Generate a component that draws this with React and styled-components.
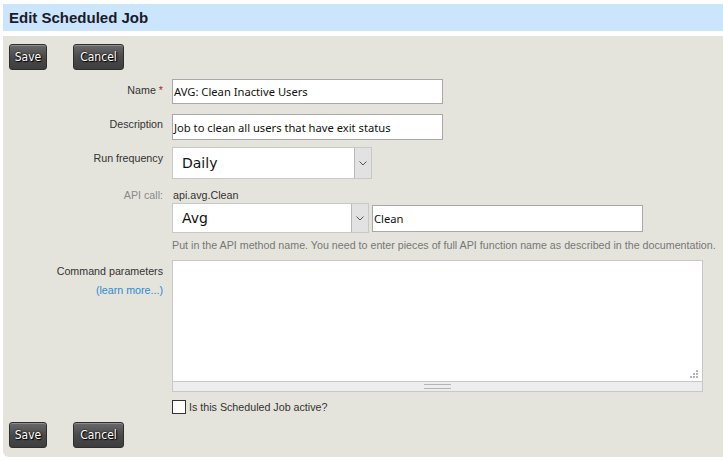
import React from "react";
import styled, { createGlobalStyle } from "styled-components";

const Global = createGlobalStyle`
  html, body { margin: 0; padding: 0; background: #fff; }
  body { font-family: "Liberation Sans", Arial, sans-serif; }
`;

const Page = styled.div`
  width: 723px;
  height: 460px;
  padding: 4px 0 0 3px;
  box-sizing: border-box;
  display: flex;
  flex-direction: column;
`;

const Header = styled.h1`
  margin: 0;
  height: 27px;
  background: #cbe5fd;
  font: bold 15px "Liberation Sans", Arial, sans-serif;
  color: #1a1a2a;
  display: flex;
  align-items: center;
  padding-left: 6px;
`;

const Panel = styled.div`
  margin-top: 5px;
  background: #e5e4dc;
  border-bottom-left-radius: 6px;
  padding: 8px 6px 8px 6px;
  height: 421px;
  box-sizing: border-box;
  display: flex;
  flex-direction: column;
`;

const ButtonBar = styled.div`
  display: flex;
  gap: 26px;
  margin-top: ${(p) => p.$top || 0}px;
`;

const Button = styled.button`
  height: 26px;
  padding: 0;
  width: ${(p) => p.$w}px;
  border: 1px solid #2e2e2e;
  border-radius: 3px;
  background: linear-gradient(#6a6a6a, #4a4a4a 50%, #3e3e3e);
  box-shadow: inset 0 1px 0 rgba(255,255,255,0.25);
  color: #fff;
  font: 12px "DejaVu Sans Condensed", "DejaVu Sans", sans-serif;
  text-shadow: 0 0 2px #000, 1px 1px 1px #000;
  cursor: pointer;
`;

const Form = styled.div`
  display: grid;
  grid-template-columns: 154px 1fr;
  column-gap: 9px;
  margin-top: 9px;
`;

const Label = styled.div`
  text-align: right;
  font-size: 10.7px;
  color: ${(p) => (p.$muted ? "#8a8a8a" : "#333")};
  padding-top: ${(p) => p.$pt || 0}px;
`;

const Star = styled.span`
  color: #a0302a;
`;

const Field = styled.div`
  margin-bottom: ${(p) => p.$mb || 0}px;
  display: flex;
  flex-direction: column;
`;

const TextInput = styled.div`
  width: ${(p) => p.$w}px;
  height: ${(p) => p.$h || 25}px;
  box-sizing: border-box;
  border: 1px solid #a8a8a8;
  background: #fff;
  font: 11.2px "Noto Sans", Tahoma, sans-serif;
  color: #111;
  display: flex;
  align-items: center;
  padding-left: 1px;
  white-space: nowrap;
  overflow: hidden;
`;

const SelectBox = styled.div`
  width: ${(p) => p.$w}px;
  height: ${(p) => p.$h}px;
  box-sizing: border-box;
  border: 1px solid #c8c8c8;
  background: #fff;
  display: flex;
`;

const SelectText = styled.div`
  flex: 1;
  display: flex;
  align-items: center;
  padding-left: 9px;
  font: 14px "DejaVu Sans", Tahoma, sans-serif;
  color: #111;
`;

const SelectArrow = styled.div`
  width: 16px;
  background: #e2e2e2;
  border-left: 1px solid #b8b8b8;
  display: flex;
  align-items: center;
  justify-content: center;
`;

const Chevron = () => (
  <svg width="8" height="5" viewBox="0 0 8 5">
    <path d="M0.5 0.5 L4 4 L7.5 0.5" fill="none" stroke="#555" strokeWidth="1" />
  </svg>
);

const ApiValue = styled.div`
  font-size: 10.7px;
  color: #333;
  height: 15px;
  padding-top: 1px;
  padding-left: 1px;
  box-sizing: border-box;
`;

const ApiRow = styled.div`
  display: flex;
  align-items: center;
  gap: 3px;
`;

const Help = styled.div`
  font-size: 10.7px;
  color: #777;
  margin-top: 6px;
  white-space: nowrap;
`;

const LabelStack = styled.div`
  display: flex;
  flex-direction: column;
  align-items: flex-end;
  gap: 7px;
  padding-top: 5px;
`;

const Learn = styled.a`
  font-size: 10.7px;
  color: #2d8ad0;
  text-decoration: none;
`;

const TextAreaWrap = styled.div`
  width: 531px;
  box-sizing: border-box;
  border: 1px solid #c8c8c8;
  display: flex;
  flex-direction: column;
`;

const TextArea = styled.div`
  height: 120px;
  background: #fff;
  position: relative;
  border-bottom: 1px solid #c8c8c8;
`;

const Grip = styled.svg`
  position: absolute;
  right: 3px;
  bottom: 2px;
`;

const ResizeBar = styled.div`
  height: 9px;
  background: #ededed;
  display: flex;
  align-items: center;
  justify-content: center;
`;

const GripLines = styled.div`
  width: 27px;
  height: 3px;
  border-top: 1px solid #b5b5b5;
  border-bottom: 1px solid #b5b5b5;
`;

const CheckRow = styled.label`
  display: flex;
  align-items: center;
  gap: 3px;
  font-size: 10.7px;
  color: #333;
`;

const Box = styled.span`
  width: 12px;
  height: 12px;
  border: 1px solid #333;
  background: #fff;
  display: inline-block;
`;

export default function App() {
  return (
    <>
      <Global />
      <Page>
        <Header>Edit Scheduled Job</Header>
        <Panel>
          <ButtonBar>
            <Button $w={38}>Save</Button>
            <Button $w={51}>Cancel</Button>
          </ButtonBar>
          <Form>
            <Label $pt={5}>Name <Star>*</Star></Label>
            <Field $mb={10}>
              <TextInput $w={271}>AVG: Clean Inactive Users</TextInput>
            </Field>

            <Label $pt={4}>Description</Label>
            <Field $mb={7}>
              <TextInput $w={271} $h={26}>Job to clean all users that have exit status</TextInput>
            </Field>

            <Label $pt={5}>Run frequency</Label>
            <Field $mb={9}>
              <SelectBox $w={200} $h={32}>
                <SelectText>Daily</SelectText>
                <SelectArrow><Chevron /></SelectArrow>
              </SelectBox>
            </Field>

            <Label $muted $pt={1}>API call:</Label>
            <Field $mb={9}>
              <ApiValue>api.avg.Clean</ApiValue>
              <ApiRow>
                <SelectBox $w={197} $h={30}>
                  <SelectText>Avg</SelectText>
                  <SelectArrow><Chevron /></SelectArrow>
                </SelectBox>
                <TextInput $w={271} $h={27}>Clean</TextInput>
              </ApiRow>
              <Help>Put in the API method name. You need to enter pieces of full API function name as described in the documentation.</Help>
            </Field>

            <LabelStack>
              <Label>Command parameters</Label>
              <Learn href="#">(learn more...)</Learn>
            </LabelStack>
            <Field $mb={8}>
              <TextAreaWrap>
                <TextArea>
                  <Grip width="9" height="9" viewBox="0 0 9 9">
                    <rect x="6" y="0" width="2" height="2" fill="#b5b5b5" />
                    <rect x="3" y="3" width="2" height="2" fill="#b5b5b5" />
                    <rect x="6" y="3" width="2" height="2" fill="#b5b5b5" />
                    <rect x="0" y="6" width="2" height="2" fill="#b5b5b5" />
                    <rect x="3" y="6" width="2" height="2" fill="#b5b5b5" />
                    <rect x="6" y="6" width="2" height="2" fill="#b5b5b5" />
                  </Grip>
                </TextArea>
                <ResizeBar><GripLines /></ResizeBar>
              </TextAreaWrap>
            </Field>

            <div />
            <Field>
              <CheckRow><Box />Is this Scheduled Job active?</CheckRow>
            </Field>
          </Form>
          <ButtonBar $top={8}>
            <Button $w={38}>Save</Button>
            <Button $w={51}>Cancel</Button>
          </ButtonBar>
        </Panel>
      </Page>
    </>
  );
}
